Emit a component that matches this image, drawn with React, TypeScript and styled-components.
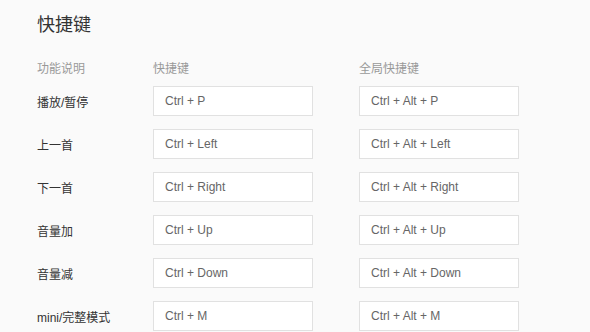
import { Fragment } from 'react'
import styled, { createGlobalStyle } from 'styled-components'

const GlobalStyle = createGlobalStyle`
  html, body {
    margin: 0;
    padding: 0;
    background-color: #fafafa;
  }
  body {
    font-family: "Liberation Sans", Arial, "Noto Sans CJK SC", sans-serif;
  }
`

const Page = styled.div`
  width: 590px;
  height: 332px;
  overflow: hidden;
  padding: 13px 0 0 37px;
  box-sizing: border-box;
`

const Title = styled.h2`
  margin: 0;
  font-size: 18px;
  line-height: 24px;
  font-weight: normal;
  color: #333;
`

const Table = styled.div`
  display: grid;
  grid-template-columns: 116px 206px 160px;
  row-gap: 13px;
  margin-top: 22px;
  align-items: center;
`

const HeadCell = styled.div`
  font-size: 12px;
  line-height: 20px;
  color: #999;
  margin-bottom: -6px;
`

const Label = styled.div`
  font-size: 12px;
  color: #333;
`

const KeyBox = styled.div`
  width: 160px;
  height: 30px;
  box-sizing: border-box;
  border: 1px solid #e1e1e1;
  background: #fff;
  padding-left: 11px;
  display: flex;
  align-items: center;
  font-size: 12px;
  color: #666;
`

const shortcuts = [
  { name: '播放/暂停', local: 'Ctrl + P', global: 'Ctrl + Alt + P' },
  { name: '上一首', local: 'Ctrl + Left', global: 'Ctrl + Alt + Left' },
  { name: '下一首', local: 'Ctrl + Right', global: 'Ctrl + Alt + Right' },
  { name: '音量加', local: 'Ctrl + Up', global: 'Ctrl + Alt + Up' },
  { name: '音量减', local: 'Ctrl + Down', global: 'Ctrl + Alt + Down' },
  { name: 'mini/完整模式', local: 'Ctrl + M', global: 'Ctrl + Alt + M' },
]

export default function App() {
  return (
    <Page>
      <GlobalStyle />
      <Title>快捷键</Title>
      <Table>
        <HeadCell>功能说明</HeadCell>
        <HeadCell>快捷键</HeadCell>
        <HeadCell>全局快捷键</HeadCell>
        {shortcuts.map((s) => (
          <Fragment key={s.name}>
            <Label>{s.name}</Label>
            <KeyBox>{s.local}</KeyBox>
            <KeyBox>{s.global}</KeyBox>
          </Fragment>
        ))}
      </Table>
    </Page>
  )
}
